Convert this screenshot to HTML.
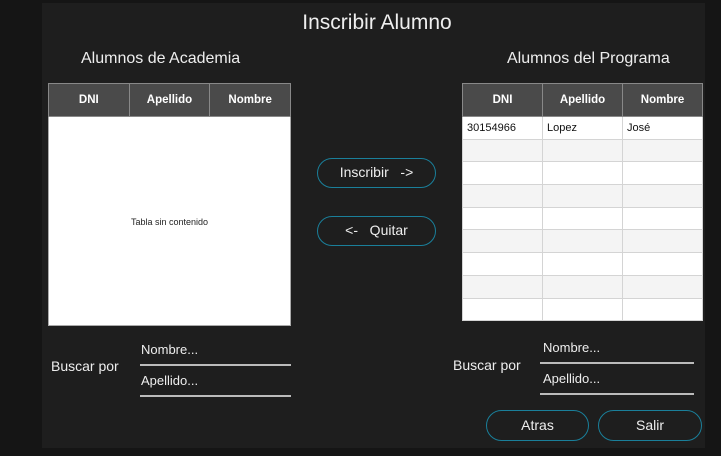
<!DOCTYPE html>
<html><head><style>
*{margin:0;padding:0;box-sizing:border-box}
body{width:721px;height:456px;background:#151515;position:relative;overflow:hidden;font-family:"Liberation Sans",sans-serif;color:#eee}
.panel{position:absolute;left:42px;top:3px;width:663px;height:445px;background:#1e1e1e}
.a{position:absolute;white-space:nowrap}
table{position:absolute;border-collapse:collapse;background:#fff;font-size:11px;color:#111;table-layout:fixed}
th{background:#4a4a4a;color:#fff;font-weight:bold;font-size:11.5px;height:33px;border:1px solid #888}
td{border:1px solid #d4d4d4;height:22.7px;padding-left:4px}
tr:nth-child(odd) td{background:#f4f4f4}
.btn{position:absolute;border:1.5px solid #1a7f9a;border-radius:16px;color:#eee;font-size:14px;text-align:center;background:#1e1e1e}
.line{position:absolute;height:1.5px;background:#bbb}
</style></head><body>
<div class="panel"></div>
<div class="a" style="left:0;width:754px;text-align:center;top:11px;font-size:21px">Inscribir Alumno</div>
<div class="a" style="left:81px;top:50px;font-size:16px">Alumnos de Academia</div>
<div class="a" style="left:507px;top:50px;font-size:16px">Alumnos del Programa</div>
<div style="position:absolute;left:48px;top:83px;width:243px;height:243px;background:#fff;border:1px solid #aaa"></div>
<table style="left:48px;top:83px;width:243px"><tr><th>DNI</th><th>Apellido</th><th>Nombre</th></tr></table>
<div class="a" style="left:48px;width:243px;text-align:center;top:217px;font-size:9px;color:#222">Tabla sin contenido</div>
<table style="left:462px;top:83px;width:241px">
<tr><th>DNI</th><th>Apellido</th><th>Nombre</th></tr>
<tr><td>30154966</td><td>Lopez</td><td>José</td></tr>
<tr><td></td><td></td><td></td></tr><tr><td></td><td></td><td></td></tr>
<tr><td></td><td></td><td></td></tr><tr><td></td><td></td><td></td></tr>
<tr><td></td><td></td><td></td></tr><tr><td></td><td></td><td></td></tr>
<tr><td></td><td></td><td></td></tr><tr><td></td><td></td><td></td></tr>
</table>
<div class="btn" style="left:317px;top:158px;width:119px;height:30px;line-height:27px">Inscribir &nbsp;&nbsp;-&gt;</div>
<div class="btn" style="left:317px;top:216px;width:119px;height:30px;line-height:27px">&lt;- &nbsp;&nbsp;Quitar</div>
<div class="a" style="left:51px;top:358px;font-size:14px">Buscar por</div>
<div class="a" style="left:141px;top:342px;font-size:13px">Nombre...</div>
<div class="line" style="left:140px;top:364px;width:151px"></div>
<div class="a" style="left:141px;top:373px;font-size:13px">Apellido...</div>
<div class="line" style="left:140px;top:395px;width:151px"></div>
<div class="a" style="left:453px;top:357px;font-size:14px">Buscar por</div>
<div class="a" style="left:543px;top:340px;font-size:13px">Nombre...</div>
<div class="line" style="left:540px;top:362px;width:154px"></div>
<div class="a" style="left:543px;top:371px;font-size:13px">Apellido...</div>
<div class="line" style="left:540px;top:393px;width:154px"></div>
<div class="btn" style="left:486px;top:410px;width:103px;height:31px;line-height:28px">Atras</div>
<div class="btn" style="left:598px;top:410px;width:104px;height:31px;line-height:28px">Salir</div>
</body></html>
